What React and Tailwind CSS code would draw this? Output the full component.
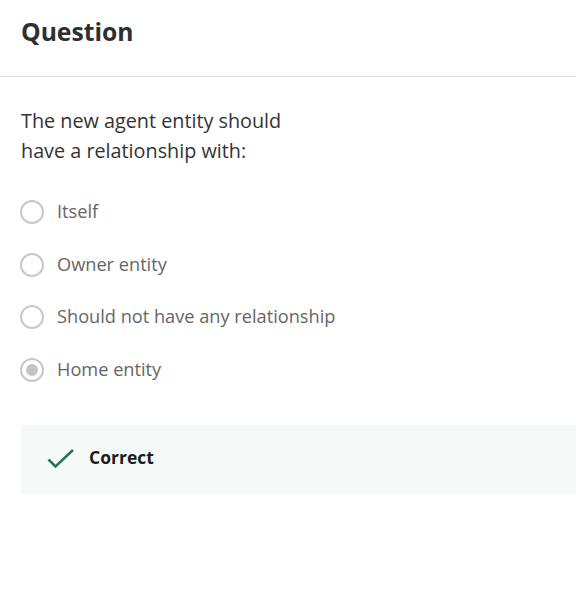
import React from "react";

const options = ["Itself", "Owner entity", "Should not have any relationship", "Home entity"];

export default function App() {
  return (
    <div className="w-[576px] h-[600px] bg-white overflow-hidden" style={{ fontFamily: '"Open Sans", sans-serif' }}>
      <div className="h-[77px] border-b border-[#e2e2e2] px-[21px] pt-[14px]">
        <h1 className="text-[24.7px] font-bold text-[#2d2f31] leading-[36px]">Question</h1>
      </div>
      <div className="pl-[21px] pt-[29px]">
        <p className="text-[19.8px] leading-[30px] text-[#333333] w-[280px]">The new agent entity should have a relationship with:</p>
        <div className="mt-[34px] flex flex-col gap-[28.5px]">
          {options.map((o, i) => (
            <div key={o} className="flex items-center h-[24px] -ml-px">
              <div className="w-[24px] h-[24px] rounded-full border-2 border-[#c8c8c8] flex items-center justify-center">
                {i === 3 && <div className="w-[12px] h-[12px] rounded-full bg-[#c4c4c4]" />}
              </div>
              <span className="ml-[13px] text-[18.2px] text-[#666666]">{o}</span>
            </div>
          ))}
        </div>
        <div className="mt-[43px] h-[69px] bg-[#f5f9f8] flex items-center pl-[26px]">
          <svg width="28" height="22" viewBox="0 0 28 22" fill="none">
            <path d="M1.5 11.5 L8.5 18.5 L26 2" stroke="#23745a" strokeWidth="2.5" />
          </svg>
          <span className="ml-[14px] text-[17.5px] font-bold text-[#1c1d1f] -translate-y-[2px]">Correct</span>
        </div>
      </div>
    </div>
  );
}
